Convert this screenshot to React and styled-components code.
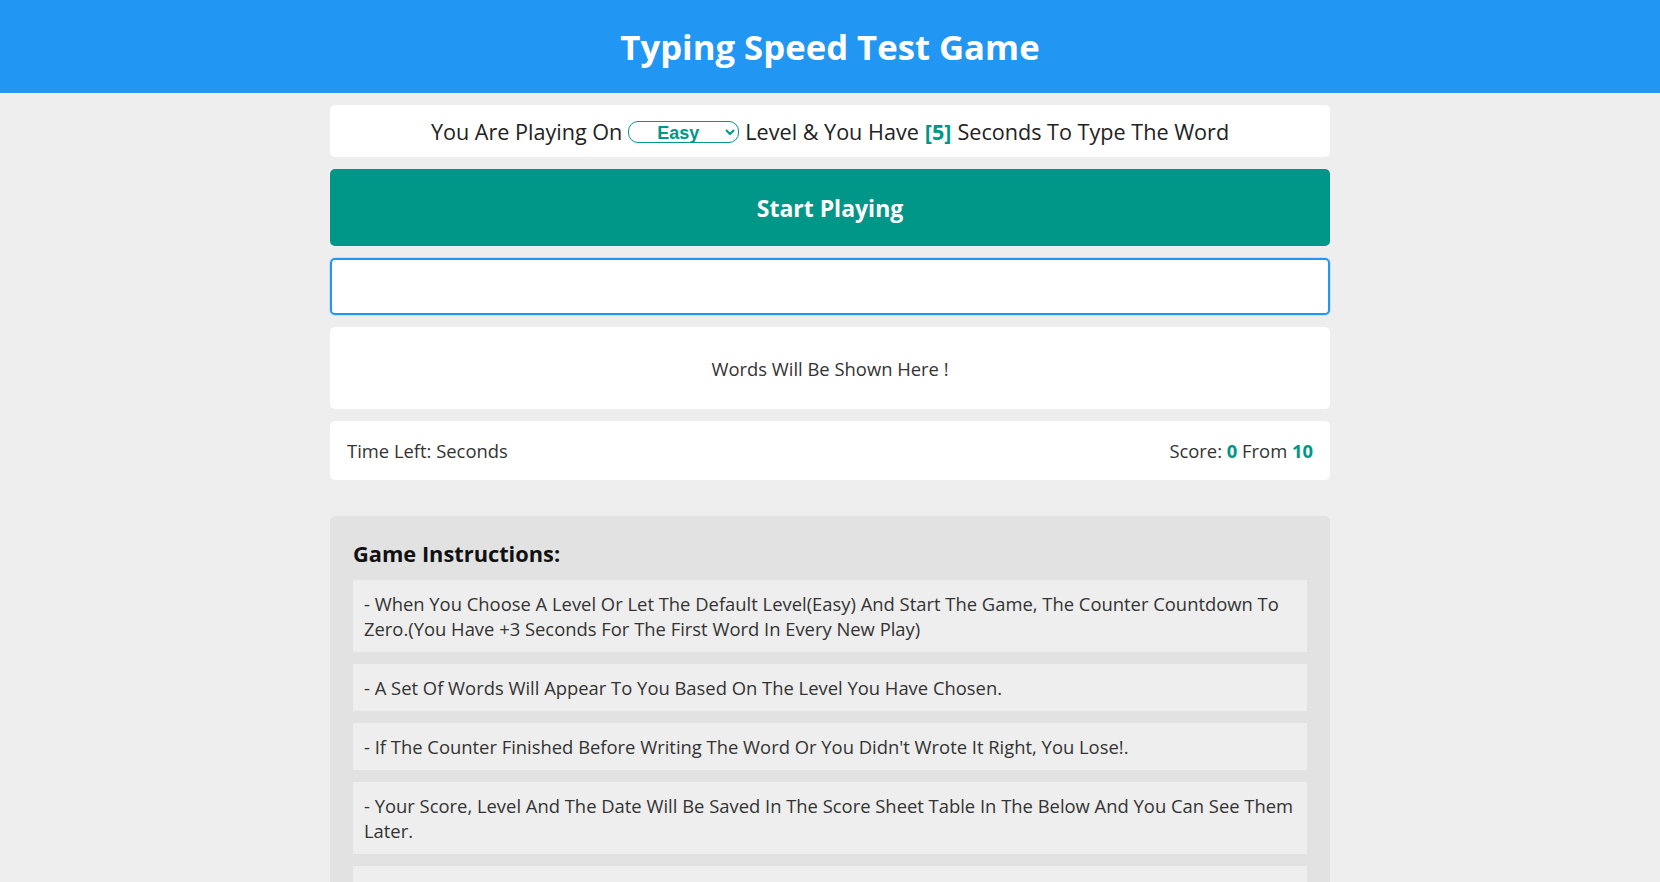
import styled, { createGlobalStyle } from 'styled-components';

const GlobalStyle = createGlobalStyle`
  * { box-sizing: border-box; }
  body {
    margin: 0;
    background: #eeeeee;
    font-family: "Open Sans", "Noto Sans", sans-serif;
    color: #222;
  }
`;

const Header = styled.h1`
  margin: 0;
  height: 93px;
  display: flex;
  align-items: center;
  justify-content: center;
  background: #2196f3;
  color: #fff;
  font-size: 34.7px;
  font-weight: 700;
`;

const Container = styled.div`
  width: 1000px;
  margin: 12px auto 0;
  display: flex;
  flex-direction: column;
  gap: 12px;
`;

const Box = styled.div`
  background: #fff;
  border-radius: 5px;
`;

const Message = styled(Box)`
  height: 52px;
  display: flex;
  align-items: center;
  justify-content: center;
  font-size: 21.6px;
  color: #222;
`;

const Highlight = styled.span`
  color: #009688;
  font-weight: 700;
  margin: 0 ${({ $space }) => ($space ? '6px' : '0')};
`;

const LevelSelect = styled.select`
  width: 111px;
  height: 22px;
  margin: 2px 6px 0;
  padding: 0 0 0 24px;
  border: 1px solid #009688;
  border-radius: 10px;
  background: #fff;
  color: #009688;
  font-family: "Liberation Sans", Arial, sans-serif;
  font-weight: 700;
  font-size: 18px;
  outline: none;
`;

const StartButton = styled.div`
  height: 77px;
  display: flex;
  align-items: center;
  justify-content: center;
  background: #009688;
  color: #fff;
  font-size: 23px;
  font-weight: 700;
  border-radius: 5px;
`;

const WordInput = styled.input`
  height: 57px;
  width: 100%;
  border: 2px solid #2196f3;
  border-radius: 5px;
  background: #fff;
  outline: none;
  box-shadow: 0 0 0 1px #c6e2fb;
  font-size: 20px;
  padding: 0 15px;
`;

const Words = styled(Box)`
  height: 82px;
  display: flex;
  align-items: center;
  justify-content: center;
  font-size: 18.4px;
  color: #333;
`;

const Control = styled(Box)`
  height: 59px;
  display: flex;
  align-items: center;
  justify-content: space-between;
  padding: 0 17px;
  font-size: 18.4px;
  color: #333;
`;

const Instructions = styled.div`
  margin-top: 24px;
  background: #e2e2e2;
  border-radius: 6px;
  padding: 20px 23px;
`;

const InstructionsTitle = styled.h3`
  margin: 0 0 9px;
  font-size: 21.8px;
  font-weight: 700;
  color: #111;
  line-height: 35px;
`;

const Item = styled.div`
  background: #eeeeee;
  padding: 11px 11px;
  margin-bottom: 12px;
  font-size: 18.4px;
  line-height: 25px;
  color: #333;
`;

const instructions = [
  '- When You Choose A Level Or Let The Default Level(Easy) And Start The Game, The Counter Countdown To Zero.(You Have +3 Seconds For The First Word In Every New Play)',
  '- A Set Of Words Will Appear To You Based On The Level You Have Chosen.',
  "- If The Counter Finished Before Writing The Word Or You Didn't Wrote It Right, You Lose!.",
  '- Your Score, Level And The Date Will Be Saved In The Score Sheet Table In The Below And You Can See Them Later.',
  '- You Can Clear The Score Sheet Table Anytime By Clicking The Clear Button.',
];

export default function App() {
  return (
    <>
      <GlobalStyle />
      <Header>Typing Speed Test Game</Header>
      <Container>
        <Message>
          You Are Playing On
          <LevelSelect defaultValue="Easy">
            <option>Easy</option>
            <option>Normal</option>
            <option>Hard</option>
          </LevelSelect>
          Level &amp; You Have <Highlight $space>[5]</Highlight> Seconds To Type The Word
        </Message>
        <StartButton>Start Playing</StartButton>
        <WordInput type="text" />
        <Words>Words Will Be Shown Here !</Words>
        <Control>
          <span>Time Left: Seconds</span>
          <span>
            Score: <Highlight>0</Highlight> From <Highlight>10</Highlight>
          </span>
        </Control>
        <Instructions>
          <InstructionsTitle>Game Instructions:</InstructionsTitle>
          {instructions.map((text) => (
            <Item key={text}>{text}</Item>
          ))}
        </Instructions>
      </Container>
    </>
  );
}
